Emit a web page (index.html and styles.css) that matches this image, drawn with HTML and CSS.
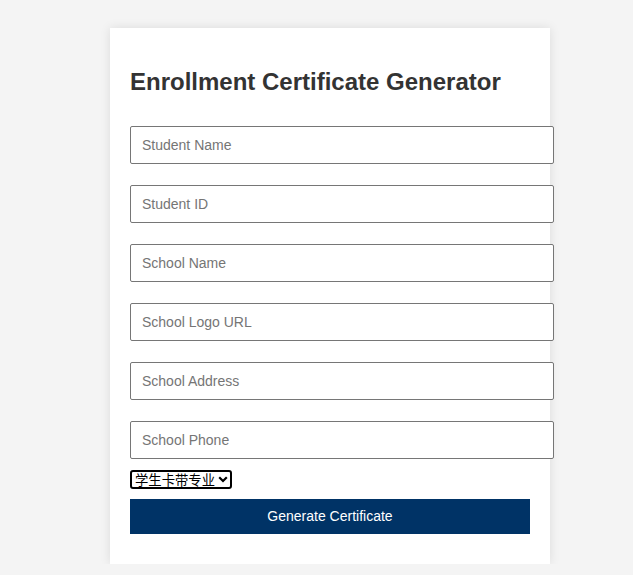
FILE: index.html
```html
<!DOCTYPE html>
<html lang="en">
  <head>
    <meta charset="UTF-8" />
    <meta name="viewport" content="width=device-width, initial-scale=1.0" />
    <title>Enrollment Certificate Generator</title>
    <link rel="stylesheet" href="styles.css">
  </head>
  <body>
    <div class="generator-container">
      <h2>Enrollment Certificate Generator</h2>
      <form class="generator-form">
        <input type="text" placeholder="Student Name">
        <input type="text" placeholder="Student ID">
        <input type="text" placeholder="School Name">
        <input type="text" placeholder="School Logo URL">
        <input type="text" placeholder="School Address">
        <input type="text" placeholder="School Phone">
        <div class="select-wrap">
          <select class="cert-type">
            <option>学生卡带专业</option>
            <option>学生卡</option>
          </select>
          <svg class="select-arrow" width="10" height="7" viewBox="0 0 10 7">
            <path d="M1.2 1.2 L5 5 L8.8 1.2" fill="none" stroke="#000" stroke-width="2.2"/>
          </svg>
        </div>
        <button type="button" class="generate-btn">Generate Certificate</button>
      </form>
    </div>
  </body>
</html>
```

FILE: styles.css
```css
body {
  font-family: "Liberation Sans", Arial, sans-serif;
  background-color: #f4f4f4;
  margin: 0;
}
.generator-container {
  background: white;
  width: 400px;
  padding: 20px;
  margin: 28px 0 0 110px;
  box-shadow: 0 0 10px rgba(0, 0, 0, 0.1);
}
h2 {
  font-size: 24px;
  color: #333;
  margin: 20px 0;
}
.generator-form {
  display: flex;
  flex-direction: column;
}
.generator-form input {
  width: 100%;
  box-sizing: content-box;
  padding: 10px 11px;
  margin: 10px 0 11px;
  font-family: "Liberation Sans", Arial, sans-serif;
  font-size: 14px;
  line-height: 16px;
  border: 1px solid #767676;
  border-radius: 2px;
  color: #333;
}
.generator-form input::placeholder {
  color: #757575;
}
.select-wrap {
  position: relative;
  align-self: flex-start;
  margin: 0 0 10px;
}
.cert-type {
  display: block;
  appearance: none;
  -webkit-appearance: none;
  box-sizing: border-box;
  width: 102px;
  height: 19px;
  margin: 0;
  padding: 0 0 0 3px;
  font-family: "Noto Sans CJK SC", sans-serif;
  font-size: 13.33px;
  line-height: 15px;
  color: #000;
  background: white;
  border: 2px solid #000;
  border-radius: 3px;
}
.select-arrow {
  position: absolute;
  right: 4px;
  top: 6px;
  pointer-events: none;
}
.generate-btn {
  margin: 0 0 10px;
  padding: 9px 10px 10px;
  border: none;
  background-color: #003366;
  color: white;
  font-family: "Liberation Sans", Arial, sans-serif;
  font-size: 14px;
  line-height: 16px;
}
```
